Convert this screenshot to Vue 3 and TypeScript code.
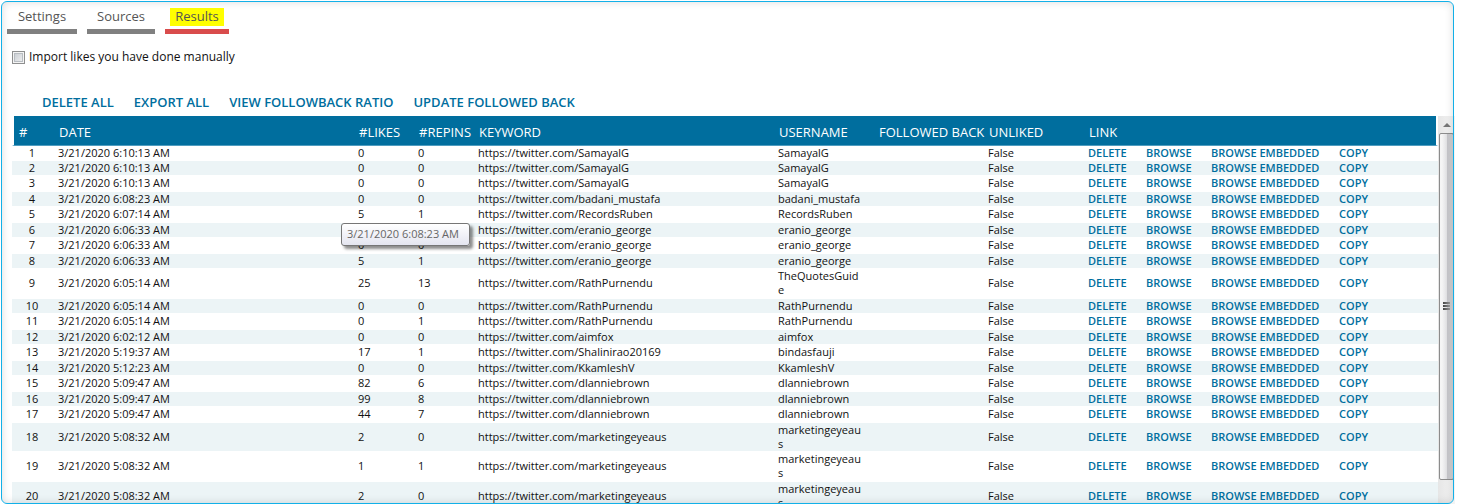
<script setup lang="ts">
import { ref } from 'vue'

interface Row {
  id: number
  date: string
  likes: number
  repins: number
  keyword: string
  username: string
}

const tabs = ['Settings', 'Sources', 'Results']
const activeTab = ref('Results')
const importLikes = ref(false)

const bulkActions = ['DELETE ALL', 'EXPORT ALL', 'VIEW FOLLOWBACK RATIO', 'UPDATE FOLLOWED BACK']
const rowActions = ['DELETE', 'BROWSE', 'BROWSE EMBEDDED', 'COPY']
const columns = ['#', 'DATE', '#LIKES', '#REPINS', 'KEYWORD', 'USERNAME', 'FOLLOWED BACK', 'UNLIKED', 'LINK']

const entries: [string, number, number, string, string?][] = [
  ['6:10:13', 0, 0, 'SamayalG'],
  ['6:10:13', 0, 0, 'SamayalG'],
  ['6:10:13', 0, 0, 'SamayalG'],
  ['6:08:23', 0, 0, 'badani_mustafa'],
  ['6:07:14', 5, 1, 'RecordsRuben'],
  ['6:06:33', 0, 0, 'eranio_george'],
  ['6:06:33', 0, 0, 'eranio_george'],
  ['6:06:33', 5, 1, 'eranio_george'],
  ['6:05:14', 25, 13, 'RathPurnendu', 'TheQuotesGuide'],
  ['6:05:14', 0, 0, 'RathPurnendu'],
  ['6:05:14', 0, 1, 'RathPurnendu'],
  ['6:02:12', 0, 0, 'aimfox'],
  ['5:19:37', 17, 1, 'Shalinirao20169', 'bindasfauji'],
  ['5:12:23', 0, 0, 'KkamleshV'],
  ['5:09:47', 82, 6, 'dlanniebrown'],
  ['5:09:47', 99, 8, 'dlanniebrown'],
  ['5:09:47', 44, 7, 'dlanniebrown'],
  ['5:08:32', 2, 0, 'marketingeyeaus'],
  ['5:08:32', 1, 1, 'marketingeyeaus'],
  ['5:08:32', 2, 0, 'marketingeyeaus'],
]

const rows: Row[] = entries.map(([time, likes, repins, account, username], i) => ({
  id: i + 1,
  date: `3/21/2020 ${time} AM`,
  likes,
  repins,
  keyword: `https://twitter.com/${account}`,
  username: username ?? account,
}))
</script>

<template>
  <main class="panel">
    <nav class="tabs">
      <button
        v-for="tab in tabs"
        :key="tab"
        type="button"
        class="tab"
        :class="{ active: tab === activeTab }"
        @click="activeTab = tab"
      >
        <span class="tab-label">{{ tab }}</span>
      </button>
    </nav>

    <label class="option">
      <input v-model="importLikes" type="checkbox" class="check" />
      <span>Import likes you have done manually</span>
    </label>

    <div class="toolbar">
      <button v-for="action in bulkActions" :key="action" type="button" class="bulk">{{ action }}</button>
    </div>

    <section class="results">
      <div class="viewport">
        <table class="grid">
          <colgroup>
            <col class="w-id" />
            <col class="w-wide" />
            <col class="w-count" />
            <col class="w-count" />
            <col class="w-wide" />
            <col class="w-user" />
            <col class="w-back" />
            <col class="w-user" />
            <col />
          </colgroup>
          <thead>
            <tr>
              <th v-for="column in columns" :key="column" scope="col">{{ column }}</th>
            </tr>
          </thead>
          <tbody>
            <tr v-for="row in rows" :key="row.id">
              <td class="id">{{ row.id }}</td>
              <td>{{ row.date }}</td>
              <td>{{ row.likes }}</td>
              <td>{{ row.repins }}</td>
              <td>{{ row.keyword }}</td>
              <td class="user">{{ row.username }}</td>
              <td></td>
              <td>False</td>
              <td>
                <div class="links">
                  <button v-for="action in rowActions" :key="action" type="button" class="link">{{ action }}</button>
                </div>
              </td>
            </tr>
          </tbody>
        </table>
        <div class="tooltip" role="tooltip">3/21/2020 6:08:23 AM</div>
      </div>

      <div class="scrollbar">
        <button type="button" class="arrow" aria-label="Scroll up">
          <svg viewBox="0 0 8 4" width="8" height="4"><path d="M4 0L8 4H0Z" fill="#777" /></svg>
        </button>
        <div class="thumb">
          <svg viewBox="0 0 8 9" width="8" height="9">
            <defs>
              <linearGradient id="grip" x1="0" x2="1" y1="0" y2="0">
                <stop offset="0" stop-color="#444" />
                <stop offset="1" stop-color="#999" />
              </linearGradient>
            </defs>
            <path d="M0 0H7V2H0ZM0 3H7V5H0ZM0 6H7V8H0Z" fill="url(#grip)" />
          </svg>
        </div>
      </div>
    </section>
  </main>
</template>

<style>
body {
  overflow: hidden;
  background: #fff;
}
</style>

<style scoped>
.panel {
  position: relative;
  box-sizing: border-box;
  display: flex;
  flex-direction: column;
  height: 100vh;
  padding: 7px 2px 0 7px;
  overflow: hidden;
  background: #fff;
  color: #111;
  font-family: 'Open Sans', 'Noto Sans', sans-serif;
  font-size: 12px;
}

.panel::after {
  content: '';
  position: absolute;
  inset: 1px 3px 0 1px;
  border: 1px solid #12b0e8;
  border-radius: 6px;
  box-shadow: inset 0 0 9px rgba(0, 0, 0, 0.14);
  pointer-events: none;
}

button {
  margin: 0;
  padding: 0;
  border: 0;
  background: none;
  font-family: inherit;
  cursor: pointer;
}

.tabs {
  display: grid;
  grid-template-columns: 70px 68px 64px;
  gap: 10px;
}

.tab {
  box-sizing: border-box;
  display: flex;
  justify-content: center;
  height: 27px;
  border-bottom: 5px solid #808080;
  color: #555;
  font-size: 13px;
  line-height: 18px;
}

.tab-label {
  height: 18px;
  padding: 0 5px;
}

.tab.active {
  border-bottom-color: #d94c4c;
}

.tab.active .tab-label {
  margin-top: 1px;
  line-height: 16px;
  background: #ff0;
}

.option {
  display: flex;
  align-items: center;
  align-self: flex-start;
  gap: 4px;
  height: 18px;
  margin: 14px 0 0 5px;
}

.option span {
  line-height: 16px;
}

.check {
  appearance: none;
  box-sizing: border-box;
  width: 13px;
  height: 13px;
  margin: 0;
  border: 1px solid #8e8f8f;
  background: linear-gradient(135deg, #c4c9cf, #f4f4f4);
  box-shadow: inset 0 0 0 1px #f4f4f4, inset 0 0 0 2px #b8bdc2;
}

.check:checked {
  background: #006e9e;
}

.toolbar {
  display: flex;
  gap: 20px;
  height: 18px;
  margin: 27px 0 5px 35px;
}

.bulk {
  color: #006e9e;
  font-size: 13px;
  font-weight: 600;
  line-height: 18px;
}

.results {
  display: flex;
  flex: 1;
  min-height: 0;
  margin-left: 5px;
}

.viewport {
  position: relative;
  flex: 1;
  min-width: 0;
  overflow: hidden;
}

.grid {
  width: 100%;
  table-layout: fixed;
  border-collapse: separate;
  border-spacing: 0;
}

.w-id { width: 40px; }
.w-wide { width: 300px; }
.w-count { width: 60px; }
.w-user { width: 100px; }
.w-back { width: 110px; }

th {
  height: 30px;
  padding: 2px 0 0 7px;
  box-sizing: border-box;
  border-bottom: 1px solid #4f9dc0;
  background: #006e9e;
  color: #fff;
  font-size: 13px;
  font-weight: 400;
  line-height: 16px;
  text-align: left;
  white-space: nowrap;
}

th:first-child {
  border-left: 2px solid #fff;
  padding-left: 5px;
}

th:last-child {
  border-right: 2px solid #fff;
}

td {
  padding: 1px 8px 2px 6px;
  font-size: 11px;
  line-height: 14px;
  vertical-align: middle;
}

tr:first-child td {
  padding-top: 0;
  padding-bottom: 1px;
}

tr:nth-child(even) td {
  padding-top: 0;
  padding-bottom: 0;
  background: #ecf4f6;
}

td.id {
  padding-left: 0;
  padding-right: 0;
  text-align: center;
}

.user {
  word-break: break-all;
}

.links {
  display: grid;
  grid-template-columns: 58px 65px 128px auto;
  justify-content: start;
}

.link {
  color: #006e9e;
  font-size: 11px;
  font-weight: 600;
  line-height: 14px;
  text-align: left;
  white-space: nowrap;
}

.tooltip {
  position: absolute;
  top: 107px;
  left: 329px;
  box-sizing: border-box;
  padding: 3px 10px 4px 5px;
  border: 1px solid #767676;
  border-radius: 3px;
  background: linear-gradient(#fff, #e4e5f0);
  box-shadow: 3px 3px 3px rgba(0, 0, 0, 0.45);
  color: #666;
  font-size: 11px;
  line-height: 14px;
  white-space: nowrap;
}

.scrollbar {
  display: flex;
  flex-direction: column;
  width: 17px;
  background: linear-gradient(90deg, #e6e6e6, #f4f4f4);
}

.arrow {
  display: flex;
  align-items: center;
  justify-content: center;
  height: 17px;
}

.thumb {
  box-sizing: border-box;
  display: flex;
  align-items: center;
  justify-content: center;
  margin: 0 1px 24px;
  flex: 1;
  border: 1px solid #8c8c8c;
  border-radius: 2px;
  background: linear-gradient(90deg, #f5f5f5 0 15%, #e2e2e4 50%, #c4c4c8 55%, #d2d2d4);
}
</style>
